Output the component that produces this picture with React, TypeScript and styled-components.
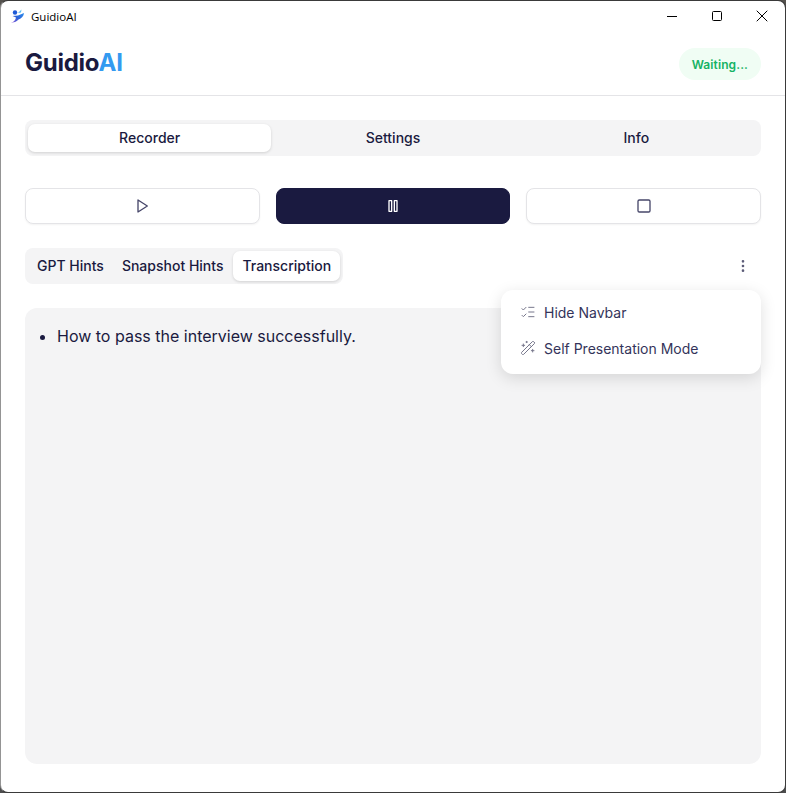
import React from 'react';
import styled, { createGlobalStyle } from 'styled-components';
import { Square, EllipsisVertical, ListChecks, WandSparkles, X } from 'lucide-react';

const GlobalStyle = createGlobalStyle`
  html, body, #root {
    margin: 0;
    height: 100%;
  }
  body {
    overflow: hidden;
    background: linear-gradient(180deg, #55524e 0%, #4a5560 30%, #2f5f9e 70%, #4d4d4d 100%);
    font-family: Inter, "Liberation Sans", sans-serif;
    color: #1a1a40;
  }
`;

const Window = styled.div`
  position: relative;
  box-sizing: border-box;
  height: 793px;
  display: flex;
  flex-direction: column;
  background: #fff;
  border: 1px solid #3a3a3a;
  border-left-color: rgba(60, 60, 60, 0.55);
  border-radius: 8px;
  overflow: hidden;
`;

const TitleBar = styled.div`
  height: 30px;
  flex: none;
  display: flex;
  align-items: center;
  padding-left: 9px;
`;

const AppTitle = styled.span`
  margin-left: 6px;
  font-family: "Open Sans", "Liberation Sans", sans-serif;
  font-size: 11.5px;
  color: #000;
  flex: 1;
`;

const WindowControl = styled.div`
  width: 45px;
  height: 30px;
  display: flex;
  align-items: center;
  justify-content: center;
  color: #000;
`;

const CloseControl = styled(WindowControl)`
  width: 46px;
`;

const Minimize = styled.div`
  width: 10px;
  height: 1px;
  background: #000;
`;

const Maximize = styled.div`
  width: 8px;
  height: 8px;
  border: 1px solid #000;
  border-radius: 1.5px;
`;

const Header = styled.header`
  height: 65px;
  flex: none;
  box-sizing: border-box;
  display: flex;
  align-items: center;
  justify-content: space-between;
  padding: 0 24px;
  border-bottom: 1px solid #e4e4e7;
`;

const Logo = styled.div`
  font-size: 24px;
  line-height: 32px;
  font-weight: 700;
  letter-spacing: -0.25px;
  color: #1a1a40;
`;

const LogoAccent = styled.span`
  color: #339af0;
`;

const StatusPill = styled.div`
  height: 32px;
  margin-top: 2px;
  padding: 0 13px;
  display: flex;
  align-items: center;
  border-radius: 16px;
  background: #f0fdf4;
  color: #16b364;
  font-size: 12px;
  font-weight: 600;
  letter-spacing: 0.1px;
`;

const Main = styled.main`
  flex: 1;
  min-height: 0;
  display: flex;
  flex-direction: column;
  padding: 24px 24px 28px;
`;

const MainTabs = styled.div`
  display: grid;
  grid-template-columns: repeat(3, 1fr);
  height: 36px;
  box-sizing: border-box;
  padding: 4px 3px;
  background: #f4f4f5;
  border-radius: 8px;
`;

const MainTab = styled.div<{ active?: boolean }>`
  display: flex;
  align-items: center;
  justify-content: center;
  padding-bottom: 2px;
  font-size: 14px;
  font-weight: 500;
  border-radius: 7px;
  background: ${({ active }) => (active ? '#fff' : 'transparent')};
  box-shadow: ${({ active }) => (active ? '0 1px 3px rgba(0, 0, 0, 0.15)' : 'none')};
`;

const Controls = styled.div`
  margin-top: 32px;
  display: grid;
  grid-template-columns: repeat(3, 1fr);
  gap: 16px;
`;

const ControlButton = styled.div<{ active?: boolean }>`
  height: 36px;
  box-sizing: border-box;
  display: flex;
  align-items: center;
  justify-content: center;
  border-radius: 8px;
  border: 1px solid ${({ active }) => (active ? '#1a1a40' : '#e4e4e7')};
  background: ${({ active }) => (active ? '#1a1a40' : '#fff')};
  color: ${({ active }) => (active ? '#fff' : '#47476a')};
  box-shadow: ${({ active }) => (active ? 'none' : '0 1px 2px rgba(0, 0, 0, 0.05)')};
`;

const SubBar = styled.div`
  margin-top: 24px;
  display: flex;
  align-items: center;
  justify-content: space-between;
`;

const SubTabs = styled.div`
  display: flex;
  height: 36px;
  box-sizing: border-box;
  padding: 3px;
  background: #f4f4f5;
  border-radius: 8px;
`;

const SubTab = styled.div<{ active?: boolean }>`
  display: flex;
  align-items: center;
  padding: 0 9px 2px;
  margin-left: ${({ active }) => (active ? '1px' : '0')};
  font-size: 14px;
  font-weight: 500;
  border-radius: 7px;
  background: ${({ active }) => (active ? '#fff' : 'transparent')};
  box-shadow: ${({ active }) => (active ? '0 1px 3px rgba(0, 0, 0, 0.15)' : 'none')};
`;

const MoreButton = styled.div`
  width: 36px;
  height: 36px;
  display: flex;
  align-items: center;
  justify-content: center;
  color: #5c5c78;
`;

const Panel = styled.div`
  margin-top: 24px;
  flex: 1;
  min-height: 0;
  background: #f4f4f5;
  border-radius: 12px;
`;

const Lines = styled.ul`
  margin: 0;
  padding: 16px 16px 16px 32px;
  font-size: 16px;
  line-height: 24px;
`;

const Menu = styled.div`
  position: absolute;
  top: 289px;
  right: 24px;
  width: 260px;
  height: 84px;
  box-sizing: border-box;
  padding: 4px 0;
  background: #fff;
  border-radius: 12px;
  box-shadow: 0 4px 16px rgba(0, 0, 0, 0.13);
`;

const MenuItem = styled.div`
  height: 36px;
  display: flex;
  align-items: center;
  gap: 8px;
  padding: 0 19px;
  font-size: 14px;
  color: #34345a;
`;

const MenuIcon = styled.span`
  display: flex;
  color: #77778c;
`;

const AppIcon = () => (
  <svg width="15" height="15" viewBox="0 0 15 15">
    <defs>
      <linearGradient id="wing" x1="0" y1="1" x2="1" y2="0">
        <stop offset="0" stopColor="#8a55d8" />
        <stop offset="0.5" stopColor="#2b63d8" />
        <stop offset="1" stopColor="#2f8fee" />
      </linearGradient>
    </defs>
    <circle cx="5" cy="3.5" r="2.2" fill="#1f5ad6" />
    <path d="M1 13.5 C4 13.2 5.5 11 6 8.5 L2.5 7 L8 6.5 L14 4 C13.8 7 11.5 9.5 8.5 10.5 C6.5 12.5 4 14 1 13.5 Z" fill="url(#wing)" />
    <path d="M8 4 L11.5 0.5 L11 3.5 Z" fill="#58bdf5" />
  </svg>
);

const PlayIcon = () => (
  <svg width="16" height="16" viewBox="0 0 24 24" fill="none" stroke="currentColor" strokeWidth="2" strokeLinecap="round" strokeLinejoin="round">
    <polygon points="6 3 20 12 6 21 6 3" />
  </svg>
);

const PauseIcon = () => (
  <svg width="16" height="16" viewBox="0 0 24 24" fill="none" stroke="currentColor" strokeWidth="2" strokeLinecap="round" strokeLinejoin="round">
    <rect x="6" y="4" width="4" height="16" />
    <rect x="14" y="4" width="4" height="16" />
  </svg>
);

export default function App() {
  return (
    <>
      <GlobalStyle />
      <Window>
        <TitleBar>
          <AppIcon />
          <AppTitle>GuidioAI</AppTitle>
          <WindowControl><Minimize /></WindowControl>
          <WindowControl><Maximize /></WindowControl>
          <CloseControl><X size={20} strokeWidth={1.2} /></CloseControl>
        </TitleBar>
        <Header>
          <Logo>Guidio<LogoAccent>AI</LogoAccent></Logo>
          <StatusPill>Waiting...</StatusPill>
        </Header>
        <Main>
          <MainTabs>
            <MainTab active>Recorder</MainTab>
            <MainTab>Settings</MainTab>
            <MainTab>Info</MainTab>
          </MainTabs>
          <Controls>
            <ControlButton><PlayIcon /></ControlButton>
            <ControlButton active><PauseIcon /></ControlButton>
            <ControlButton><Square size={16} strokeWidth={2} /></ControlButton>
          </Controls>
          <SubBar>
            <SubTabs>
              <SubTab>GPT Hints</SubTab>
              <SubTab>Snapshot Hints</SubTab>
              <SubTab active>Transcription</SubTab>
            </SubTabs>
            <MoreButton><EllipsisVertical size={16} /></MoreButton>
          </SubBar>
          <Panel>
            <Lines>
              <li>How to pass the interview successfully.</li>
            </Lines>
          </Panel>
        </Main>
        <Menu>
          <MenuItem><MenuIcon><ListChecks size={16} strokeWidth={1.5} /></MenuIcon>Hide Navbar</MenuItem>
          <MenuItem><MenuIcon><WandSparkles size={16} strokeWidth={1.5} /></MenuIcon>Self Presentation Mode</MenuItem>
        </Menu>
      </Window>
    </>
  );
}
